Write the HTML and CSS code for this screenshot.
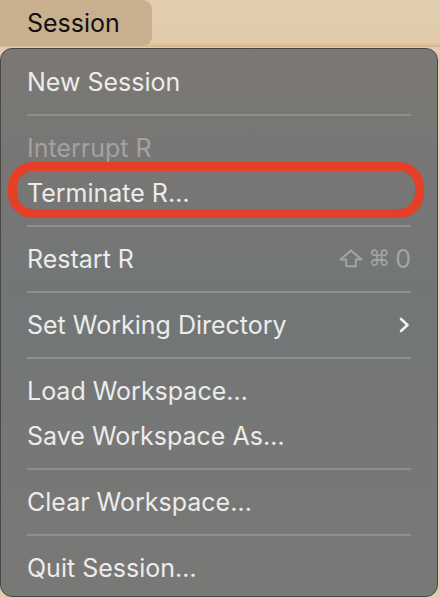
FILE: index.html
```html
<!DOCTYPE html>
<html>
<head>
<meta charset="utf-8">
<link rel="stylesheet" href="styles.css">
</head>
<body>
<div class="menubar">
  <div class="menubar-item active">Session</div>
</div>
<div class="menu">
  <div class="item">New Session</div>
  <div class="sep"></div>
  <div class="item disabled">Interrupt R</div>
  <div class="item marked">Terminate R…</div>
  <div class="sep"></div>
  <div class="item">
    <span>Restart R</span>
    <span class="shortcut">
      <svg class="shift" width="24" height="19" viewBox="0 0 24 19"><path d="M12 1.5 L22.5 10.5 H16.8 V17.2 H7.2 V10.5 H1.5 Z" fill="none" stroke="currentColor" stroke-width="2" stroke-linejoin="round"/></svg>
      <span class="cmd">⌘</span>
      <span class="zero">0</span>
    </span>
  </div>
  <div class="sep"></div>
  <div class="item">
    <span>Set Working Directory</span>
    <svg class="chev" width="12" height="16" viewBox="0 0 12 16"><path d="M3 2 L9.5 8 L3 14" fill="none" stroke="currentColor" stroke-width="2.6" stroke-linecap="round" stroke-linejoin="round"/></svg>
  </div>
  <div class="sep"></div>
  <div class="item">Load Workspace…</div>
  <div class="item">Save Workspace As…</div>
  <div class="sep"></div>
  <div class="item">Clear Workspace…</div>
  <div class="sep"></div>
  <div class="item">Quit Session…</div>
</div>
</body>
</html>
```
FILE: styles.css
```css
html, body {
  margin: 0;
  padding: 0;
}
body {
  width: 440px;
  height: 598px;
  overflow: hidden;
  background: #e1ccae;
  font-family: Inter, "Liberation Sans", sans-serif;
}
.menubar {
  height: 47px;
  display: flex;
  background: linear-gradient(#e2cdb0, #e0cbac 90%, #d4b68c);
}
.menubar-item {
  width: 125px;
  padding-left: 27px;
  height: 46px;
  display: flex;
  align-items: center;
  font-size: 25px;
  color: #111;
}
.menubar-item.active {
  background: #c8b08f;
  border-radius: 0 9px 9px 0;
}
.menu {
  width: 438px;
  height: 549px;
  box-sizing: border-box;
  margin-top: 1px;
  border: 1px solid #4a4846;
  border-radius: 12px;
  background: linear-gradient(#7b7874 0%, #767676 30%, #727677 45%, #767776 70%, #797876 100%);
  padding: 10px 26px 0 26px;
  display: flex;
  flex-direction: column;
}
.item {
  height: 45px;
  flex: none;
  display: flex;
  align-items: center;
  justify-content: space-between;
  font-size: 25px;
  color: #ececeb;
  position: relative;
}
.item.disabled {
  color: #a2a2a1;
}
.item.marked::after {
  content: "";
  position: absolute;
  left: -19px;
  right: -13px;
  top: -8px;
  bottom: -3px;
  border: 9px solid #e63f27;
  border-radius: 25px;
}
.sep {
  height: 21px;
  flex: none;
  display: flex;
  align-items: center;
}
.sep::before {
  content: "";
  display: block;
  width: 100%;
  height: 2px;
  background: #8f8e8c;
}
.shortcut {
  display: flex;
  align-items: center;
  gap: 5px;
  color: #a3a4a4;
  font-size: 25px;
}
.cmd {
  font-family: "DejaVu Sans", sans-serif;
  font-size: 22px;
}
.chev {
  color: #f0f0f0;
  margin-right: 1px;
}
```
